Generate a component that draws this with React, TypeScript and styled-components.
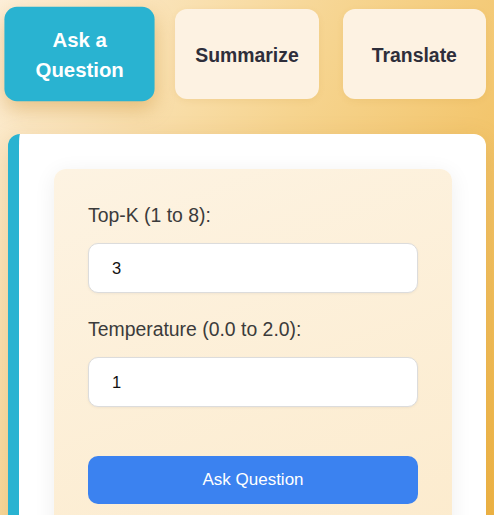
import { useState } from "react";
import styled, { createGlobalStyle } from "styled-components";

const GlobalStyle = createGlobalStyle`
  html, body {
    min-height: 100%;
  }
  body {
    margin: 0;
    padding: 8px;
    min-height: 100vh;
    box-sizing: border-box;
    font-family: "Liberation Sans", Arial, sans-serif;
    background: linear-gradient(120deg, #fdefd9 0%, #f6d48f 45%, #efb546 100%);
    background-attachment: fixed;
    overflow: hidden;
  }
  * {
    box-sizing: border-box;
  }
`;

const Page = styled.div`
  display: flex;
  flex-direction: column;
  gap: 35px;
`;

const Tabs = styled.div`
  display: grid;
  grid-template-columns: repeat(3, 1fr);
  gap: 24px;
  margin-top: 1px;
`;

const Tab = styled.button<{ $active: boolean }>`
  display: flex;
  align-items: center;
  justify-content: center;
  padding: 17px 16px 15px;
  border: none;
  border-radius: 12px;
  font-family: inherit;
  font-size: 19.4px;
  line-height: 1.5;
  font-weight: 700;
  text-align: center;
  cursor: pointer;
  background: ${(p) => (p.$active ? "#29b3d1" : "#fdf2e2")};
  color: ${(p) => (p.$active ? "#ffffff" : "#2e2e3a")};
  transform: ${(p) => (p.$active ? "scale(1.05)" : "none")};
  box-shadow: ${(p) =>
    p.$active
      ? "0 8px 18px rgba(196, 130, 30, 0.35)"
      : "0 2px 6px rgba(196, 140, 40, 0.12)"};
`;

const Card = styled.div`
  background: #ffffff;
  border-left: 11px solid #29b3d1;
  border-radius: 12px;
  padding: 35px 34px 0 35px;
  min-height: 420px;
  box-shadow: 0 6px 24px rgba(170, 110, 20, 0.18);
`;

const Panel = styled.div`
  background: linear-gradient(160deg, #fdf3e2 0%, #fcebcd 100%);
  border-radius: 12px;
  padding: 35px 34px 34px;
  min-height: 380px;
  box-shadow: 0 4px 22px rgba(0, 0, 0, 0.07);
  display: flex;
  flex-direction: column;
`;

const Field = styled.div`
  display: flex;
  flex-direction: column;
  gap: 16px;
  margin-bottom: 25px;
`;

const Label = styled.label`
  font-size: 19.4px;
  line-height: 23px;
  color: #3b3b3b;
`;

const Input = styled.input`
  height: 50px;
  width: 100%;
  padding: 0 23px;
  border: 1px solid #dcdcdc;
  border-radius: 10px;
  background: #ffffff;
  font-family: inherit;
  font-size: 16.5px;
  color: #111;
  outline: none;
  box-shadow: 0 1px 3px rgba(0, 0, 0, 0.05);
`;

const Submit = styled.button`
  margin-top: 24px;
  height: 48px;
  width: 100%;
  border: none;
  border-radius: 10px;
  background: #3b82f0;
  color: #ffffff;
  font-family: inherit;
  font-size: 17px;
  cursor: pointer;
`;

const tabs = ["Ask a Question", "Summarize", "Translate"];

export default function App() {
  const [active, setActive] = useState(0);
  const [topK, setTopK] = useState("3");
  const [temp, setTemp] = useState("1");

  return (
    <>
      <GlobalStyle />
      <Page>
        <Tabs>
          {tabs.map((t, i) => (
            <Tab key={t} $active={i === active} onClick={() => setActive(i)}>
              {t}
            </Tab>
          ))}
        </Tabs>
        <Card>
          <Panel>
            <Field>
              <Label>Top-K (1 to 8):</Label>
              <Input value={topK} onChange={(e) => setTopK(e.target.value)} />
            </Field>
            <Field>
              <Label>Temperature (0.0 to 2.0):</Label>
              <Input value={temp} onChange={(e) => setTemp(e.target.value)} />
            </Field>
            <Submit>Ask Question</Submit>
          </Panel>
        </Card>
      </Page>
    </>
  );
}
